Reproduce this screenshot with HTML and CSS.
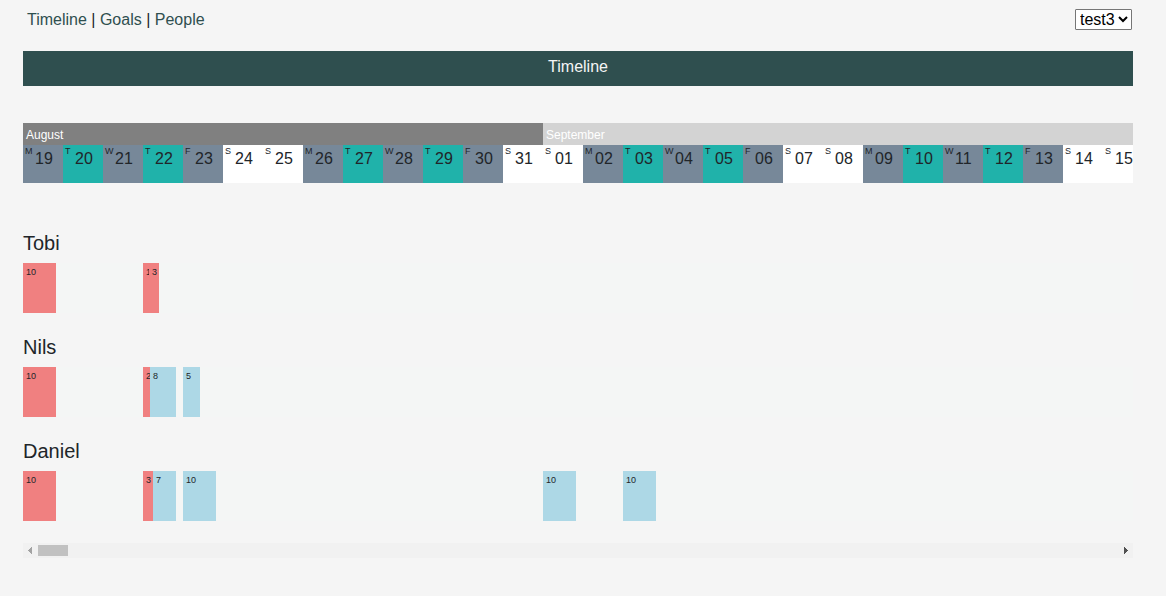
FILE: index.html
```html
<!DOCTYPE html>
<html lang="en">
<head>
<meta charset="utf-8">
<meta name="viewport" content="width=device-width, initial-scale=1">
<title>Timeline</title>
<link rel="stylesheet" href="styles.css">
</head>
<body>
<header class="topbar">
  <nav class="nav"><a href="#timeline">Timeline</a> | <a href="#goals">Goals</a> | <a href="#people">People</a></nav>
  <select class="project" aria-label="Project"><option>test3</option></select>
</header>
<main id="timeline">
  <h1 class="banner">Timeline</h1>
  <div class="calendar">
    <div class="months">
      <div class="month august">August</div>
      <div class="month september">September</div>
    </div>
    <div class="days">
      <div class="day odd"><small>M</small><span>19</span></div>
      <div class="day even"><small>T</small><span>20</span></div>
      <div class="day odd"><small>W</small><span>21</span></div>
      <div class="day even"><small>T</small><span>22</span></div>
      <div class="day odd"><small>F</small><span>23</span></div>
      <div class="day"><small>S</small><span>24</span></div>
      <div class="day"><small>S</small><span>25</span></div>
      <div class="day odd"><small>M</small><span>26</span></div>
      <div class="day even"><small>T</small><span>27</span></div>
      <div class="day odd"><small>W</small><span>28</span></div>
      <div class="day even"><small>T</small><span>29</span></div>
      <div class="day odd"><small>F</small><span>30</span></div>
      <div class="day"><small>S</small><span>31</span></div>
      <div class="day"><small>S</small><span>01</span></div>
      <div class="day odd"><small>M</small><span>02</span></div>
      <div class="day even"><small>T</small><span>03</span></div>
      <div class="day odd"><small>W</small><span>04</span></div>
      <div class="day even"><small>T</small><span>05</span></div>
      <div class="day odd"><small>F</small><span>06</span></div>
      <div class="day"><small>S</small><span>07</span></div>
      <div class="day"><small>S</small><span>08</span></div>
      <div class="day odd"><small>M</small><span>09</span></div>
      <div class="day even"><small>T</small><span>10</span></div>
      <div class="day odd"><small>W</small><span>11</span></div>
      <div class="day even"><small>T</small><span>12</span></div>
      <div class="day odd"><small>F</small><span>13</span></div>
      <div class="day"><small>S</small><span>14</span></div>
      <div class="day"><small>S</small><span>15</span></div>
    </div>
  </div>
  <section class="person">
    <h2>Tobi</h2>
    <div class="track">
      <div class="slot" style="grid-column: 1"><div class="task red" style="width: 33px">10</div></div>
      <div class="slot" style="grid-column: 4"><div class="task red" style="width: 6px">1</div><div class="task red" style="width: 10px">3</div></div>
    </div>
  </section>
  <section class="person">
    <h2>Nils</h2>
    <div class="track">
      <div class="slot" style="grid-column: 1"><div class="task red" style="width: 33px">10</div></div>
      <div class="slot" style="grid-column: 4"><div class="task red" style="width: 7px">2</div><div class="task blue" style="width: 26px">8</div></div>
      <div class="slot" style="grid-column: 5"><div class="task blue" style="width: 17px">5</div></div>
    </div>
  </section>
  <section class="person">
    <h2>Daniel</h2>
    <div class="track">
      <div class="slot" style="grid-column: 1"><div class="task red" style="width: 33px">10</div></div>
      <div class="slot" style="grid-column: 4"><div class="task red" style="width: 10px">3</div><div class="task blue" style="width: 23px">7</div></div>
      <div class="slot" style="grid-column: 5"><div class="task blue" style="width: 33px">10</div></div>
      <div class="slot" style="grid-column: 14"><div class="task blue" style="width: 33px">10</div></div>
      <div class="slot" style="grid-column: 16"><div class="task blue" style="width: 33px">10</div></div>
    </div>
  </section>
  <div class="scroller">
    <button type="button" class="arrow" aria-label="Scroll left" disabled><svg width="15" height="15" viewBox="0 0 15 15"><path d="M9 4v7H8v-1H7V9H6V8H5V7h1V6h1V5h1V4z" fill="#a3a3a3"/></svg></button>
    <div class="thumb"></div>
    <button type="button" class="arrow end" aria-label="Scroll right"><svg width="15" height="15" viewBox="0 0 15 15"><path d="M6 4v7h1v-1h1V9h1V8h1V7H9V6H8V5H7V4z" fill="#505050"/></svg></button>
  </div>
</main>
</body>
</html>
```
FILE: styles.css
```css
* {
  box-sizing: border-box;
}

body {
  margin: 0;
  padding: 7px 33px 38px 23px;
  background: #f5f5f5;
  color: #212529;
  font-family: "Liberation Sans", Arial, sans-serif;
  font-size: 16px;
  line-height: 24px;
}

.topbar {
  display: flex;
  justify-content: space-between;
  align-items: center;
  height: 25px;
  padding: 0 1px 0 4px;
}

.nav a {
  color: darkslategray;
  text-decoration: none;
}

.project {
  height: 21px;
  margin: 0;
  padding: 0;
  border: 1px solid #767676;
  border-radius: 1px;
  background-color: #fff;
  color: #000;
  font-family: inherit;
  font-size: 16px;
}

.banner {
  margin: 19px 0 37px;
  padding: 4px 0 7px;
  background: darkslategray;
  color: #f5f5f5;
  font-size: 16px;
  font-weight: 400;
  line-height: 24px;
  text-align: center;
}

.calendar {
  margin-bottom: 48px;
  overflow: hidden;
}

.months,
.days {
  display: flex;
}

.month {
  height: 22px;
  padding-left: 3px;
  color: #fff;
  font-size: 12px;
}

.august {
  flex: 0 0 520px;
  background: gray;
}

.september {
  flex: 1;
  background: lightgray;
}

.day {
  display: flex;
  flex: 0 0 40px;
  height: 38px;
  padding-left: 2px;
  background: #fff;
  line-height: 28px;
}

.day small {
  flex: 0 0 10px;
  font-size: 9px;
  line-height: 12px;
}

.day.odd {
  background: lightslategray;
}

.day.even {
  background: lightseagreen;
}

.person {
  margin-bottom: 22px;
}

.person h2 {
  margin: 0 0 8px;
  font-size: 20px;
  font-weight: 400;
  line-height: 24px;
}

.track {
  display: grid;
  grid-template-columns: repeat(27, 40px) 1fr;
  height: 50px;
  background: #f4f6f5;
}

.slot {
  display: flex;
}

.task {
  flex: none;
  padding: 3px 0 0 3px;
  overflow: hidden;
  font-size: 9px;
  line-height: 12px;
}

.red {
  background: lightcoral;
}

.blue {
  background: lightblue;
}

.scroller {
  display: flex;
  align-items: center;
  height: 15px;
  background: #f1f1f1;
}

.arrow {
  display: flex;
  padding: 0;
  border: 0;
  background: none;
}

.arrow.end {
  margin-left: auto;
}

.thumb {
  width: 30px;
  height: 11px;
  background: #c1c1c1;
}
```
